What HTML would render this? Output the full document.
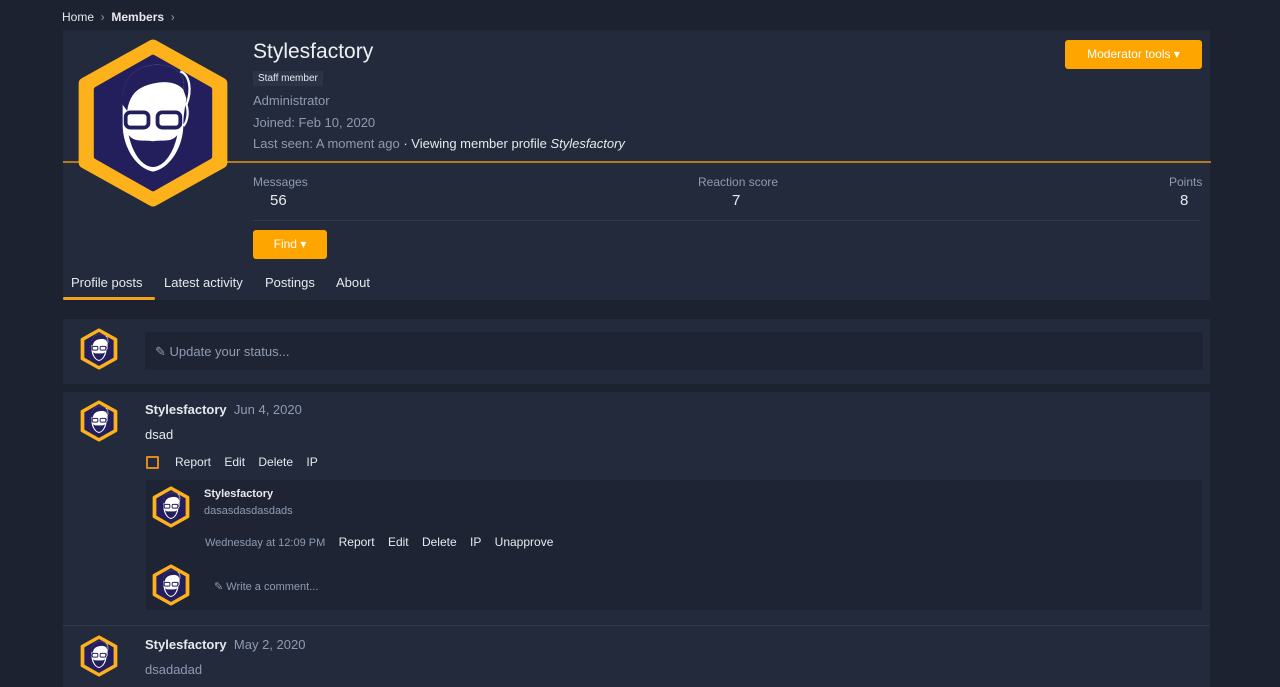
<!DOCTYPE html>
<html><head><meta charset="utf-8"><style>
*{margin:0;padding:0;box-sizing:border-box}
body{width:1280px;height:687px;overflow:hidden;background:#1d2230;font-family:"Liberation Sans",sans-serif;color:#e6e9ef;position:relative}
.a{position:absolute;white-space:nowrap}
.card{position:absolute;background:#232a3b}
.muted{color:#8f9bb3}
.btn{position:absolute;background:#ffa500;border-radius:3px;color:#fff;font-size:12px;text-align:center}
.av{position:absolute}
</style></head><body>
<svg width="0" height="0" style="position:absolute">
<defs>
<symbol id="hex" viewBox="0 0 100 112">
<polygon points="50,5 95,30 95,82 50,107 5,82 5,30" fill="#fdb11a" stroke="#fdb11a" stroke-width="8" stroke-linejoin="round"/>
<polygon points="50,13 87,34 87,78 50,99 13,78 13,34" fill="#231f5c" stroke="#231f5c" stroke-width="4" stroke-linejoin="round"/>
<path d="M30,42 C29,22 45,16 57,18 C67,19 72,26 70,34 L72,40 C71,46 70,51 70,57 C70,72 61,86 50,88 C39,86 30,72 30,57 Z" fill="#fff"/>
<path d="M30,44 C28,22 45,16 57,18 C67,19 72,26 70,34 C66,29 58,28 50,30 C42,32 35,35 33,48 Z" fill="#231f5c"/>
<path d="M68,22 C74,24 76,34 72,44 C74,50 72,56 70,58" stroke="#fff" stroke-width="1.5" fill="none"/>
<rect x="32" y="49" width="15" height="10" rx="3" fill="#fff" stroke="#231f5c" stroke-width="2.5"/>
<rect x="53" y="49" width="15" height="10" rx="3" fill="#fff" stroke="#231f5c" stroke-width="2.5"/>
<path d="M34,64 C37,78 44,85 50,85 C56,85 63,78 66,64 C62,69 57,67 50,68 C43,67 38,69 34,64 Z" fill="#231f5c"/>
</symbol>
</defs></svg>

<div class="a" style="left:62px;top:10px;font-size:12px;color:#e6e9ef">Home <span class="muted">&nbsp;›&nbsp;</span> <b>Members</b> <span class="muted">&nbsp;›</span></div>

<div class="card" style="left:63px;top:30px;width:1147px;height:270px"></div>
<div style="position:absolute;left:63px;top:161px;width:1148px;height:2px;background:#b07c1f"></div>
<svg class="av" style="left:77px;top:38px" width="152" height="170"><use href="#hex"/></svg>
<div class="a" style="left:253px;top:40px;font-size:21px;color:#eef0f4">Stylesfactory</div>
<div class="a" style="left:253px;top:71px;font-size:10px;background:#2b3346;padding:2px 5px;color:#e6e9ef">Staff member</div>
<div class="a muted" style="left:253px;top:93px;font-size:13px">Administrator</div>
<div class="a muted" style="left:253px;top:115px;font-size:13px">Joined: Feb 10, 2020</div>
<div class="a" style="left:253px;top:136px;font-size:13px"><span class="muted">Last seen: A moment ago</span> · Viewing member profile <i>Stylesfactory</i></div>
<div class="btn" style="left:1065px;top:40px;width:137px;height:29px;line-height:29px">Moderator tools ▾</div>

<div class="a muted" style="left:253px;top:175px;font-size:12px">Messages</div>
<div class="a" style="left:270px;top:192px;font-size:15px">56</div>
<div class="a muted" style="left:698px;top:175px;font-size:12px">Reaction score</div>
<div class="a" style="left:732px;top:192px;font-size:15px">7</div>
<div class="a muted" style="left:1169px;top:175px;font-size:12px">Points</div>
<div class="a" style="left:1180px;top:192px;font-size:15px">8</div>
<div style="position:absolute;left:253px;top:220px;width:947px;height:1px;background:#313a4d"></div>
<div class="btn" style="left:253px;top:230px;width:74px;height:29px;line-height:29px">Find ▾</div>

<div class="a" style="left:71px;top:275px;font-size:13px">Profile posts</div>
<div style="position:absolute;left:63px;top:297px;width:92px;height:3px;background:#f2a21c;border-radius:2px"></div>
<div class="a" style="left:164px;top:275px;font-size:13px">Latest activity</div>
<div class="a" style="left:265px;top:275px;font-size:13px">Postings</div>
<div class="a" style="left:336px;top:275px;font-size:13px">About</div>

<div class="card" style="left:63px;top:319px;width:1147px;height:65px"></div>
<svg class="av" style="left:80px;top:328px" width="38" height="42"><use href="#hex"/></svg>
<div style="position:absolute;left:145px;top:332px;width:1058px;height:38px;background:#1e2433"></div>
<div class="a muted" style="left:155px;top:344px;font-size:13px">✎ Update your status...</div>

<div class="card" style="left:63px;top:392px;width:1147px;height:295px"></div>
<svg class="av" style="left:80px;top:400px" width="38" height="42"><use href="#hex"/></svg>
<div class="a" style="left:145px;top:402px;font-size:13px"><b>Stylesfactory</b> <span class="muted">&nbsp;Jun 4, 2020</span></div>
<div class="a" style="left:145px;top:427px;font-size:13px">dsad</div>
<div style="position:absolute;left:146px;top:456px;width:13px;height:13px;border:2px solid #e08a1e;border-radius:1px"></div>
<div class="a" style="left:175px;top:455px;font-size:12px">Report&nbsp;&nbsp;&nbsp;&nbsp;Edit&nbsp;&nbsp;&nbsp;&nbsp;Delete&nbsp;&nbsp;&nbsp;&nbsp;IP</div>

<div style="position:absolute;left:146px;top:480px;width:1056px;height:130px;background:#1e2433"></div>
<svg class="av" style="left:152px;top:486px" width="38" height="42"><use href="#hex"/></svg>
<div class="a" style="left:204px;top:488px;font-size:11px;font-weight:bold">Stylesfactory</div>
<div class="a muted" style="left:204px;top:505px;font-size:11px">dasasdasdasdads</div>
<div class="a" style="left:205px;top:535px;font-size:12px"><span class="muted" style="font-size:11px">Wednesday at 12:09 PM</span>&nbsp;&nbsp;&nbsp;&nbsp;Report&nbsp;&nbsp;&nbsp;&nbsp;Edit&nbsp;&nbsp;&nbsp;&nbsp;Delete&nbsp;&nbsp;&nbsp;&nbsp;IP&nbsp;&nbsp;&nbsp;&nbsp;Unapprove</div>
<svg class="av" style="left:152px;top:564px" width="38" height="42"><use href="#hex"/></svg>
<div class="a muted" style="left:214px;top:580px;font-size:11px">✎ Write a comment...</div>

<div style="position:absolute;left:63px;top:625px;width:1147px;height:1px;background:#313a4d"></div>
<svg class="av" style="left:80px;top:635px" width="38" height="42"><use href="#hex"/></svg>
<div class="a" style="left:145px;top:637px;font-size:13px"><b>Stylesfactory</b> <span class="muted">&nbsp;May 2, 2020</span></div>
<div class="a muted" style="left:145px;top:662px;font-size:13px">dsadadad</div>
</body></html>
